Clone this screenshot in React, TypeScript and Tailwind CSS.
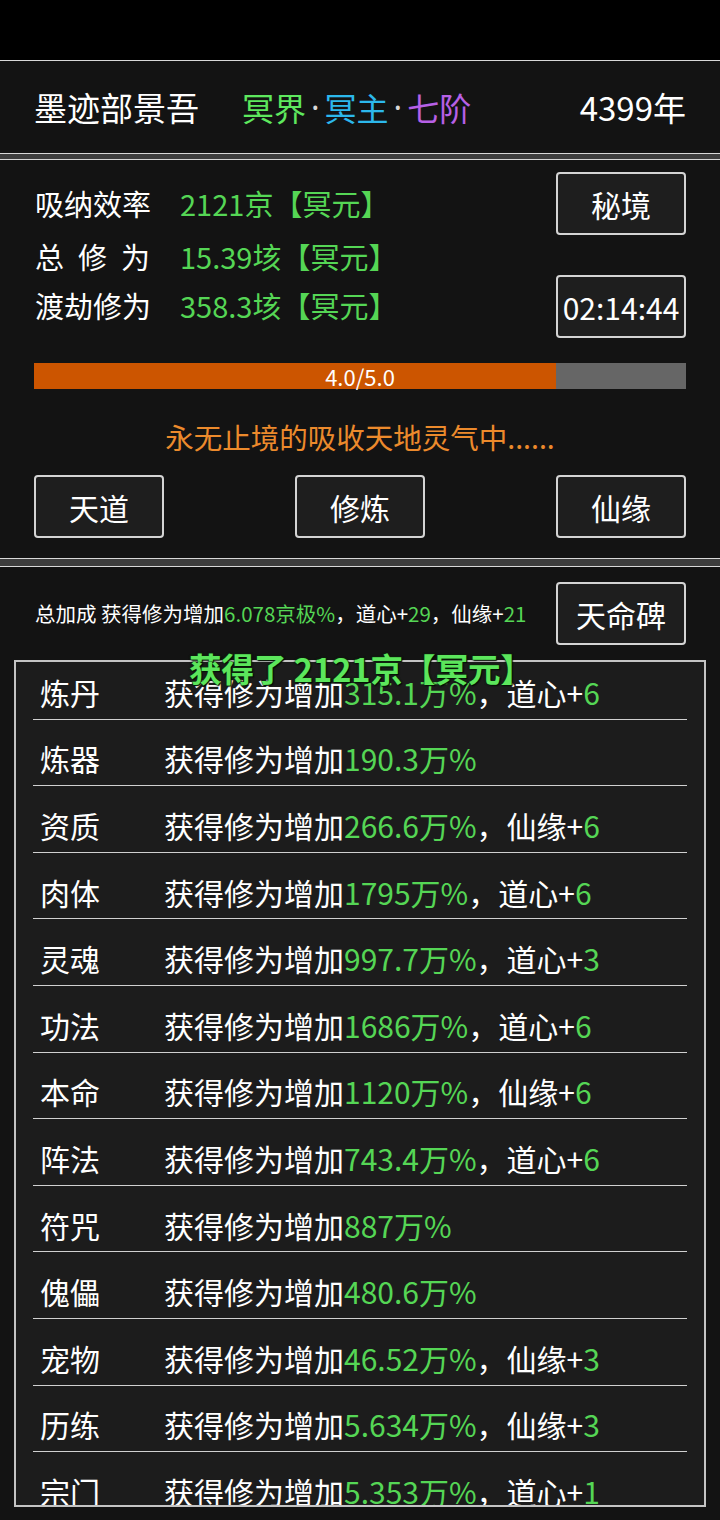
import React from "react";

const G = "text-[#55d655]";

type Row = { name: string; val: string; extra?: { label: string; n: string } };

const rows: Row[] = [
  { name: "炼丹", val: "315.1万%", extra: { label: "道心", n: "6" } },
  { name: "炼器", val: "190.3万%" },
  { name: "资质", val: "266.6万%", extra: { label: "仙缘", n: "6" } },
  { name: "肉体", val: "1795万%", extra: { label: "道心", n: "6" } },
  { name: "灵魂", val: "997.7万%", extra: { label: "道心", n: "3" } },
  { name: "功法", val: "1686万%", extra: { label: "道心", n: "6" } },
  { name: "本命", val: "1120万%", extra: { label: "仙缘", n: "6" } },
  { name: "阵法", val: "743.4万%", extra: { label: "道心", n: "6" } },
  { name: "符咒", val: "887万%" },
  { name: "傀儡", val: "480.6万%" },
  { name: "宠物", val: "46.52万%", extra: { label: "仙缘", n: "3" } },
  { name: "历练", val: "5.634万%", extra: { label: "仙缘", n: "3" } },
  { name: "宗门", val: "5.353万%", extra: { label: "道心", n: "1" } },
];

function Btn({ children, className = "" }: { children: React.ReactNode; className?: string }) {
  return (
    <div
      className={
        "w-[130px] h-[63px] flex items-center justify-center bg-[#1e1e1e] border-2 border-[#d4d4d4] rounded-[4px] text-white text-[30px] leading-none " +
        className
      }
    >
      {children}
    </div>
  );
}

function Dot() {
  return (
    <span
      className="text-[#d8d8d8] mx-[5px]"
      style={{ fontFamily: '"Noto Sans", "DejaVu Sans", sans-serif' }}
    >
      ·
    </span>
  );
}

export default function App() {
  return (
    <div
      className="w-[720px] h-[1520px] overflow-hidden bg-[#3d3d3d] text-white"
      style={{ fontFamily: '"Noto Sans CJK SC", "Noto Sans", sans-serif' }}
    >
      <div className="h-[60px] bg-black" />

      {/* Header panel */}
      <div className="h-[94px] bg-[#131313] border-y border-[#d8d8d8] flex items-center pl-[34px] pr-[34px]">
        <div className="w-[208px] text-[33px] leading-none whitespace-nowrap">墨迹部景吾</div>
        <div className="text-[32px] leading-none whitespace-nowrap flex items-center">
          <span className="text-[#5ee85e]">冥界</span>
          <Dot />
          <span className="text-[#2cb8ec]">冥主</span>
          <Dot />
          <span className="text-[#b760e6]">七阶</span>
        </div>
        <div className="ml-auto text-[33px] leading-none">4399年</div>
      </div>

      <div className="h-[5px]" />

      {/* Stats panel */}
      <div className="h-[400px] bg-[#131313] border-y border-[#d8d8d8] px-[34px] pt-[12px] flex flex-col">
        <div className="flex justify-between">
          <div className="flex flex-col pl-[1px]">
            <div className="flex items-center h-[40px] mt-[12px] text-[29px] whitespace-nowrap">
              <span className="w-[145px]">吸纳效率</span>
              <span className={G}>2121京【冥元】</span>
            </div>
            <div className="flex items-center h-[40px] mt-[13px] text-[29px] whitespace-nowrap">
              <span className="w-[145px] flex gap-[14px]">
                <span>总</span>
                <span>修</span>
                <span>为</span>
              </span>
              <span className={G}>15.39垓【冥元】</span>
            </div>
            <div className="flex items-center h-[40px] mt-[9px] text-[29px] whitespace-nowrap">
              <span className="w-[145px]">渡劫修为</span>
              <span className={G}>358.3垓【冥元】</span>
            </div>
          </div>
          <div className="flex flex-col gap-[40px]">
            <Btn>秘境</Btn>
            <Btn className="text-[29px]">02:14:44</Btn>
          </div>
        </div>

        <div className="mt-[25px] h-[26px] bg-[#666666] relative flex">
          <div className="h-full w-[80%] bg-[#cc5500]" />
          <div className="absolute inset-0 flex items-center justify-center text-[22px] leading-none text-white">
            4.0/5.0
          </div>
        </div>

        <div className="mt-[28px] h-[40px] flex items-center justify-center text-[28.5px] text-[#ec8a2c] whitespace-nowrap">
          永无止境的吸收天地灵气中......
        </div>

        <div className="mt-[18px] flex justify-between">
          <Btn>天道</Btn>
          <Btn>修炼</Btn>
          <Btn>仙缘</Btn>
        </div>
      </div>

      <div className="h-[7px]" />

      {/* List panel */}
      <div className="relative h-[960px] bg-[#131313] border-t border-[#d8d8d8] pt-[15px]">
        <div className="flex items-center justify-between pl-[35px] pr-[34px]">
          <div className="text-[20.5px] leading-none whitespace-nowrap">
            总加成 获得修为增加<span className={G}>6.078京极%</span>，道心+<span className={G}>29</span>，仙缘+
            <span className={G}>21</span>
          </div>
          <Btn>天命碑</Btn>
        </div>

        <div className="mt-[15px] mx-[14px] h-[847px] bg-[#1c1c1c] border-2 border-[#c4c4c4] overflow-hidden">
          <div className="-mt-[9px]">
            {rows.map((r) => (
              <div
                key={r.name}
                className="h-[66.6px] mx-[17px] border-b border-[#d0d0d0] flex items-center pt-[13px] text-[30px] whitespace-nowrap"
              >
                <span className="w-[131px] pl-[7px]">{r.name}</span>
                <span>
                  获得修为增加<span className={G}>{r.val}</span>
                  {r.extra && (
                    <>
                      ，{r.extra.label}+<span className={G}>{r.extra.n}</span>
                    </>
                  )}
                </span>
              </div>
            ))}
          </div>
        </div>

        <div className="absolute left-0 right-0 top-[81px] h-[40px] flex items-center justify-center pl-[2px] text-[32.5px] font-semibold text-[#5ce65c] whitespace-nowrap [text-shadow:0_0_2px_#0a2a0a,0_0_2px_#0a2a0a,1px_1px_1px_#000]">
          获得了 2121京【冥元】
        </div>
      </div>
    </div>
  );
}
